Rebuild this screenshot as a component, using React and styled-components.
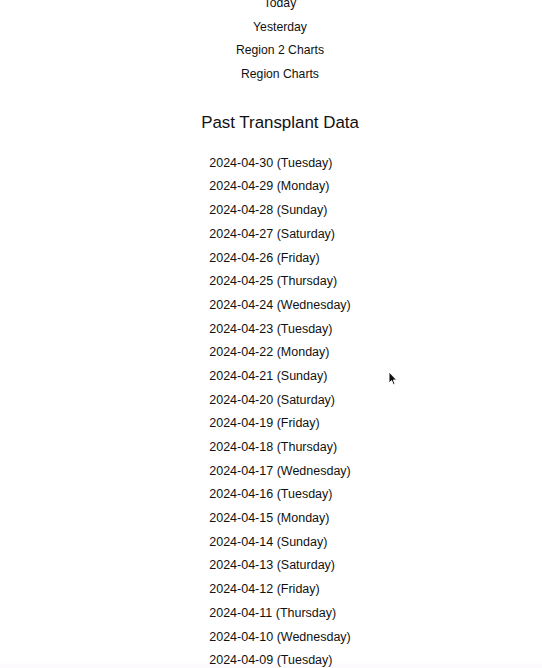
import React from "react";
import styled, {createGlobalStyle} from "styled-components";

const Global = createGlobalStyle`
  html, body {
    margin: 0;
    padding: 0;
    background: #fff;
    overflow: hidden;
  }
  body {
    font-family: "Liberation Sans", Arial, sans-serif;
    color: #111;
    -webkit-font-smoothing: antialiased;
  }
`;

const Page = styled.div`
  position: relative;
  height: 668px;
  overflow: hidden;
  padding-left: 18px;
  display: flex;
  flex-direction: column;
  align-items: center;
  background: linear-gradient(to bottom, #fff 0, #fff 662px, #fbf9fb 666px);
`;

const Nav = styled.nav`
  margin-top: -8px;
  display: flex;
  flex-direction: column;
  align-items: center;
`;

const NavLink = styled.a`
  display: block;
  height: 23.7px;
  line-height: 23.7px;
  font-size: 12.2px;
  color: #111;
  text-decoration: none;
  cursor: pointer;
`;

const Heading = styled.h2`
  margin: 24px 0 0;
  height: 24px;
  line-height: 24px;
  font-size: 16.9px;
  font-weight: 400;
`;

const DateList = styled.ul`
  list-style: none;
  margin: 17px 0 0;
  padding: 0;
  display: flex;
  flex-direction: column;
  align-items: flex-start;
`;

const DateItem = styled.li`
  height: 23.7px;
  line-height: 23.7px;
  font-size: 12.5px;
`;

const Pointer = styled.svg`
  position: absolute;
  left: 388px;
  top: 371px;
`;

const days = ["Sunday", "Monday", "Tuesday", "Wednesday", "Thursday", "Friday", "Saturday"];

function pastDates() {
    let list = [];
    for (let d = 30; d >= 9; d--) {
        let dt = new Date(Date.UTC(2024, 3, d));
        let dd = String(d).padStart(2, "0");
        list.push(`2024-04-${dd} (${days[dt.getUTCDay()]})`);
    }
    return list;
}

export default function App() {
    const links = ["Today", "Yesterday", "Region 2 Charts", "Region Charts"];

    return (
        <>
            <Global/>
            <Page>
                <Nav>
                    {links.map((l) => <NavLink key={l}>{l}</NavLink>)}
                </Nav>
                <Heading>Past Transplant Data</Heading>
                <DateList>
                    {pastDates().map((d) => <DateItem key={d}>{d}</DateItem>)}
                </DateList>
                <Pointer width="10" height="15" viewBox="0 0 10 15">
                    <path d="M1 1 L1 12 L3.6 9.6 L5.4 13.6 L7 12.9 L5.3 9 L8.6 9 Z"
                          fill="#111" stroke="#fff" strokeWidth="0.9" strokeLinejoin="round"/>
                </Pointer>
            </Page>
        </>
    );
}
